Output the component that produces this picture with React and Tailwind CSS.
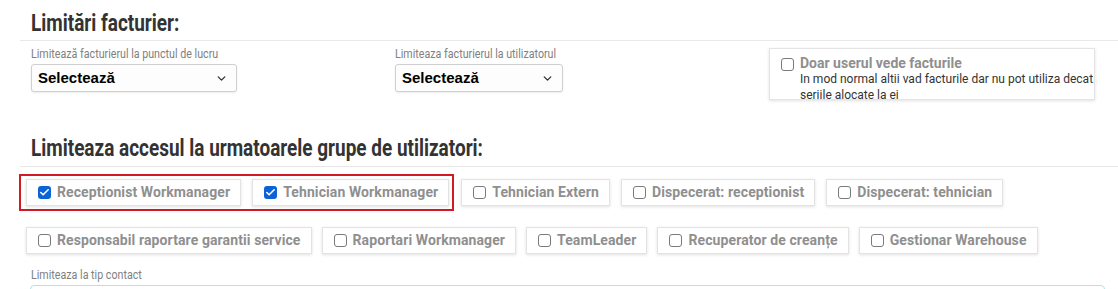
import { ChevronDown, Check } from 'lucide-react';

const rowOne = ['Tehnician Extern', 'Dispecerat: receptionist', 'Dispecerat: tehnician'];

const rowTwo = [
  'Responsabil raportare garantii service',
  'Raportari Workmanager',
  'TeamLeader',
  'Recuperator de creanțe',
  'Gestionar Warehouse',
];

const Box = ({ checked }) =>
  checked ? (
    <span className="w-[13px] h-[13px] rounded-[3px] bg-[#0b63d8] flex items-center justify-center shrink-0">
      <Check size={11} strokeWidth={3.5} className="text-white" />
    </span>
  ) : (
    <span className="w-[13px] h-[13px] rounded-[3px] border-[1.5px] border-[#7a7a7a] bg-white shrink-0" />
  );

const Chip = ({ label, checked }) => (
  <div className="h-[27px] flex items-center gap-[6px] pl-[11px] pr-[10px] bg-white border border-[#e3e3e3] shadow-[0_1px_3px_rgba(0,0,0,0.12)]">
    <Box checked={checked} />
    <span className="text-[14px] font-bold text-[#8f8f8f] font-['Roboto',sans-serif] tracking-[0.1px]">{label}</span>
  </div>
);

const Label = ({ children }) => (
  <div className="flex h-[14px]">
    <span className="inline-block origin-left scale-x-[0.89] whitespace-nowrap text-[12px] leading-[14px] text-[#808080] font-['Roboto',sans-serif]">
      {children}
    </span>
  </div>
);

const Heading = ({ children }) => (
  <div className="flex pl-[11px] h-[30px]">
    <span className="inline-block origin-left scale-x-[0.79] whitespace-nowrap text-[24px] leading-[30px] font-bold text-[#333] font-['Roboto',sans-serif]">
      {children}
    </span>
  </div>
);

const Select = ({ width }) => (
  <div className={`${width} h-[28px] mt-[3px] flex items-center justify-between pl-[6px] pr-[8px] border border-[#d0d0d0] rounded-[3px] bg-[#fdfdfd] shadow-[0_1px_2px_rgba(0,0,0,0.08)]`}>
    <span className="text-[15px] font-bold text-black font-['Liberation_Sans',Arial,sans-serif]">Selectează</span>
    <ChevronDown size={13} strokeWidth={2.5} className="text-[#333]" />
  </div>
);

export default function App() {
  return (
    <div className="w-[1118px] h-[289px] overflow-hidden bg-white pl-[20px] pt-[8px]">
      <Heading>Limitări facturier:</Heading>
      <div className="h-px bg-[#e8e8e8] mt-[2px]" />

      <div className="flex pl-[11px] pt-[6px] h-[92px]">
        <div className="w-[364px]">
          <Label>Limitează facturierul la punctul de lucru</Label>
          <Select width="w-[206px]" />
        </div>
        <div className="w-[374px]">
          <Label>Limiteaza facturierul la utilizatorul</Label>
          <Select width="w-[168px]" />
        </div>
        <div className="w-[326px] h-[52px] mt-[1px] flex gap-[6px] pl-[11px] pt-[7px] border border-[#e4e4e4] shadow-[0_1px_3px_rgba(0,0,0,0.12)] font-['Roboto',sans-serif]">
          <div className="flex pt-[2px]">
            <Box />
          </div>
          <div>
            <div className="text-[14px] leading-[15px] font-bold text-[#8f8f8f]">Doar userul vede facturile</div>
            <div className="text-[12px] leading-[16px] text-[#333]">
              In mod normal altii vad facturile dar nu pot utiliza decat seriile alocate la ei
            </div>
          </div>
        </div>
      </div>

      <Heading>Limiteaza accesul la urmatoarele grupe de utilizatori:</Heading>
      <div className="h-px bg-[#e8e8e8] mt-[3px]" />

      <div className="flex items-center mt-[7px] -ml-px">
        <div className="flex gap-[11px] border-2 border-[#d11a22] py-[3px] pl-[5px] pr-[3px]">
          <Chip label="Receptionist Workmanager" checked />
          <Chip label="Tehnician Workmanager" checked />
        </div>
        <div className="flex gap-[11px] ml-[7px]">
          {rowOne.map((l) => (
            <Chip key={l} label={l} />
          ))}
        </div>
      </div>

      <div className="flex gap-[10px] mt-[16px] pl-[6px]">
        {rowTwo.map((l) => (
          <Chip key={l} label={l} />
        ))}
      </div>

      <div className="pl-[11px] mt-[14px]">
        <Label>Limiteaza la tip contact</Label>
      </div>
      <div className="ml-[10px] mr-[13px] mt-[3px] h-[20px] border border-[#a9e4ef] rounded-[4px]" />
    </div>
  );
}
